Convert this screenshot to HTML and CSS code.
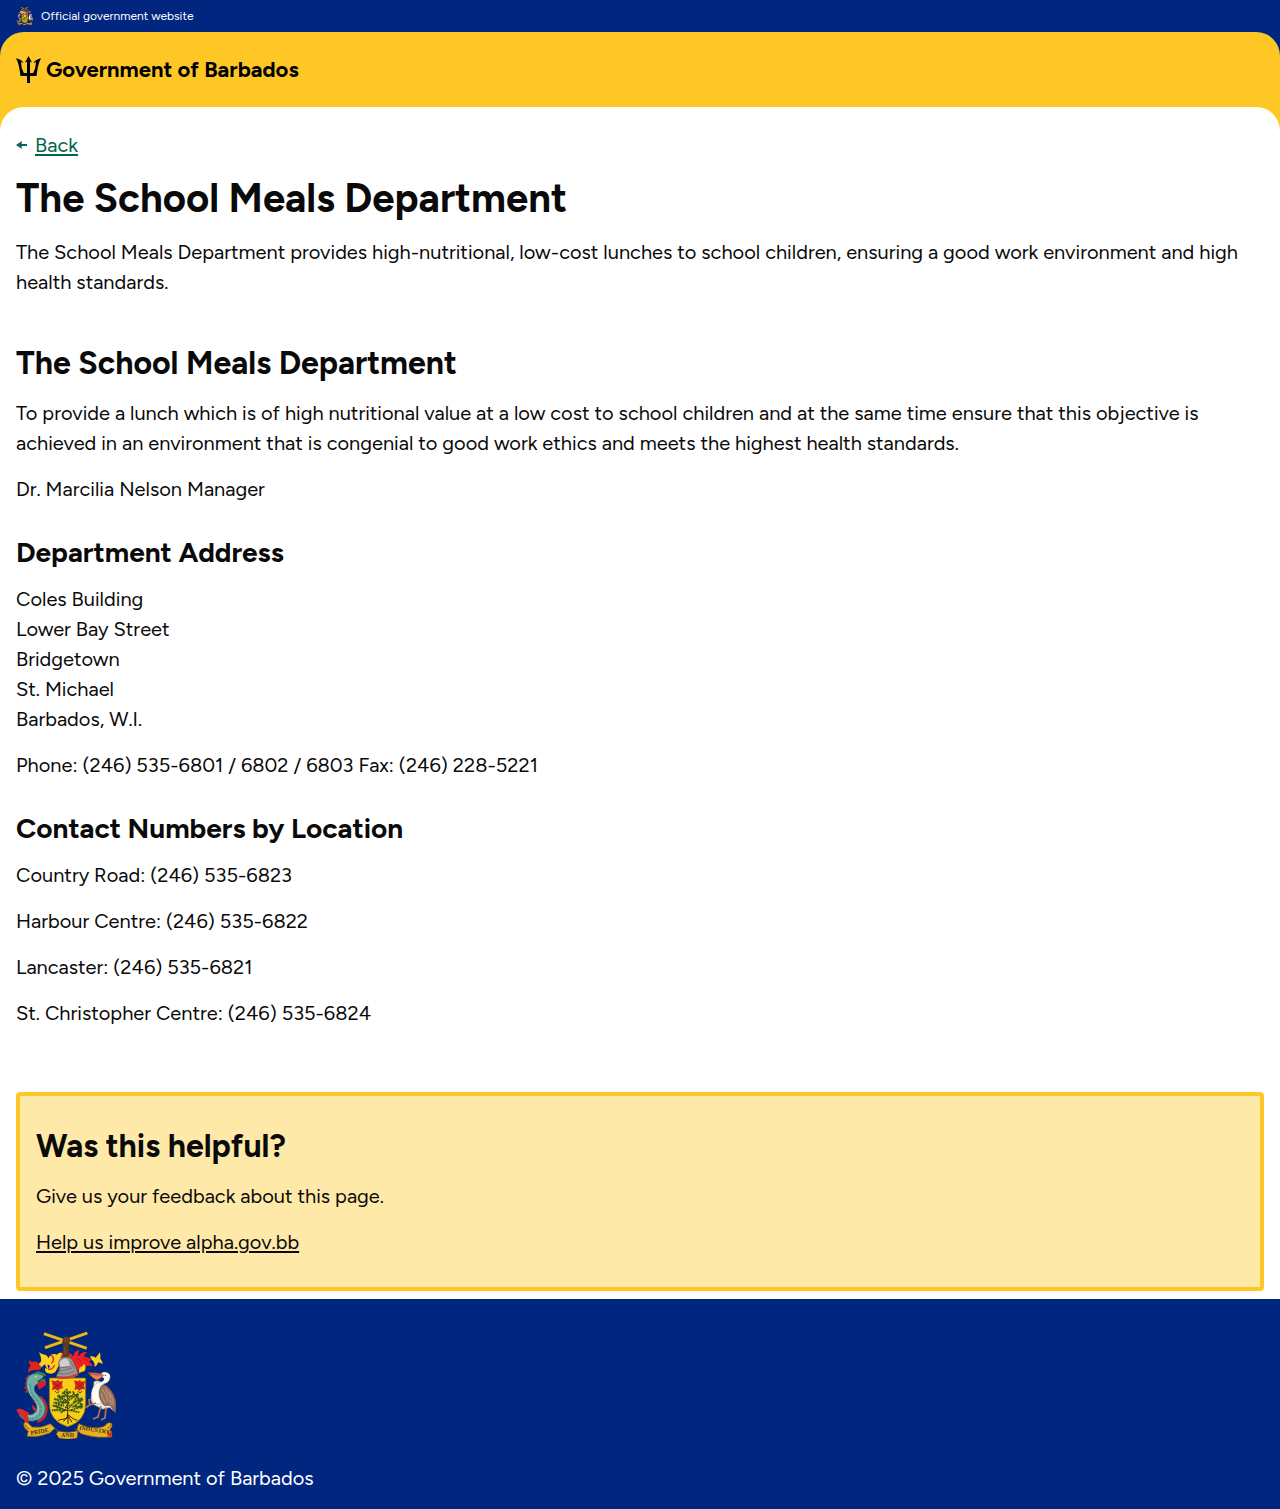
FILE: index.html
```html
<!DOCTYPE html>
<html lang="en">
<head>
<meta charset="utf-8">
<meta name="viewport" content="width=device-width, initial-scale=1">
<title>The School Meals Department</title>
<link rel="stylesheet" href="styles.css">
</head>
<body>
<svg class="sprite" aria-hidden="true">
  <symbol id="coat-of-arms" viewBox="24 28 300 324">
    <!-- crossed sugar cane held by an arm -->
    <g fill="none">
      <path d="M108 36 236 80M238 34 111 78" stroke="#6b5210" stroke-width="10"/>
      <path d="M108 36 236 80M238 34 111 78" stroke="#e8b923" stroke-width="8"/>
    </g>
    <path d="M165 52q0-7 8-8l10 2q5 4 3 12l-4 15 4 32h-24l4-32-4-12z" fill="#5b3620"/>
    <path d="M172 48v14M179 49v13M171 75v24" stroke="#936036" stroke-width="2" fill="none"/>
    <!-- mantling, left side -->
    <path d="M60 152q0-14 8-20-7-8-5-16 8 6 16 4 10-2 13 7l9 9q-4 11-17 8-14 0-24 8z" fill="#e3241d"/>
    <path d="M92 127q8-4 8-13-2-12-7-22 11 8 19 7 7 3 10 11 3-12 14-13 16 0 20 16l-4 20-10 18q-10 8-22 4-12-4-8-17 4 5 11 1 6-6-2-10-12-5-20 8z" fill="#fbd01f"/>
    <path d="M100 97q4 11 14 15 10 4 17-4 10-5 16 4-6 12-18 10-10 0-10 9 0 10 9 12-10 2-14-7-3-12-10-17-8-8-4-22z" fill="#fbd01f"/>
    <path d="M126 101q8 0 10 8 2 9-6 16M120 142q12 4 20-12" fill="none" stroke="#e3241d" stroke-width="4"/>
    <path d="M148 97q8-6 15-3v14l-12 12q-6-12-3-23z" fill="#fbd01f"/>
    <path d="M163 94l-6 14 6 6 3-18zM186 94q11 6 6 20l-6 8-8-14z" fill="#e3241d"/>
    <!-- mantling, right side -->
    <path d="M188 112q0-10 8-10 4-16 19-16-7 10-3 18 10-16 26-12-10 6-9 14 13-2 21 8l-8 6q10 4 12 14-12-4-20 0-2 6-6 12-8-2-12-10-2 10-10 16l-12-14z" fill="#ed2024"/>
    <path d="M246 104q12-2 17 4l13-16q2 12 1 20 8 6 7 16-8-6-13-6-4 10-11 14 0-12-4-17-7-4-10-15zM214 138q10-2 14-12 8 10 2 22l-18 6z" fill="#fbd01f"/>
    <path d="M205 110q10 2 14 10M226 112q8 0 14 6" fill="none" stroke="#a3110f" stroke-width="2"/>
    <!-- shield -->
    <path d="M124 169h109v77q0 52-54 69-55-17-55-69z" fill="#f8cd16" stroke="#806410" stroke-width="2"/>
    <!-- helmet -->
    <path d="M152 124q2-16 20-18 18 0 24 14 8 16 15 38l-14 10-46 3-6-8 10-20z" fill="#9c9b99" stroke="#55504d" stroke-width="2"/>
    <path d="M155 122q8-13 22-10 7 6 8 20l-28 4z" fill="#cfcfcd"/>
    <path d="M152 139l33-4 5 5-36 9zM150 155q26 7 50-7M187 117l12 24" fill="none" stroke="#5c5757" stroke-width="2"/>
    <path d="M148 162q29 7 62-8l2 6q-28 16-64 9z" fill="#c74136"/>
    <!-- red flowers on the shield -->
    <g fill="#d7261e">
      <path d="M130 176l13 3 7-5 6 6 8-4-2 14 3 10-9 1-6 7-8-5-11 2 4-12z"/>
      <path d="M198 176l11 3 7-4 5 5 11-2-4 13 3 12-10-1-6 6-7-5-9 1 3-13z"/>
    </g>
    <path d="M141 208q8 11 13 0M209 208q8 11 13 0" fill="none" stroke="#2e5420" stroke-width="3"/>
    <path d="M139 185l17 15m2-16-17 14M206 184l17 15m1-15-17 15" stroke="#80120f" stroke-width="2" fill="none"/>
    <!-- bearded fig tree -->
    <path d="M179 207v78M179 245l-31-22M179 233l21-20M179 263l33-31M179 267l-39-14M179 224l-15-12" fill="none" stroke="#4b3519" stroke-width="3"/>
    <path d="M179 276l-2 14-27 6M179 284l-13 16M180 280l20 14 8 1M181 285l11 17M180 280v27" fill="none" stroke="#35240f" stroke-width="3"/>
    <g fill="none" stroke="#31581f" stroke-width="5" stroke-dasharray="6 2">
      <path d="M178 202l-12 12 23-3-26 13 34 0-42 1 24 13 32-20-13 23 27-8-28 22 28-1-38 12 27 6"/>
      <path d="M151 219l9 13-22 0 29 10-30 1 31 9-34 0 29 9-31 5 38 0-14 8M176 236l-14 9 22-4-12 18 19-11M195 209l5 14 8-6 1 15 11-2-8 14 10 4-10 7 9 5"/>
    </g>
    <!-- dolphin -->
    <path d="M99 222q24 22 19 49-3 27-31 33l8-22q-5-32-20-43z" fill="#c92528"/>
    <path d="M64 156l-5 58-8-2 5-9-8-3 7-9-5-5 7-8-5-7z" fill="#d4232b"/>
    <path d="M55 181q3-24 29-26 14-4 24 9-7 11-19 14l8 10q-16-3-18 10-2 11 13 25 22 23 20 42-4 29-35 33-27 4-45-18l16-5q22 11 34-5 11-19-7-39-20-21-20-50z" fill="#6dafa5" stroke="#264f52" stroke-width="2"/>
    <path d="M66 187q-3 25 17 45 27 29 8 51-9 10-26 9" fill="none" stroke="#3d8088" stroke-width="8" stroke-dasharray="2 4"/>
    <path d="M61 192q0 23 18 43 22 27 5 44-10 9-26 2" fill="none" stroke="#d5e5d4" stroke-width="3" stroke-dasharray="3 2"/>
    <path d="M92 179q13-7 20-3 6 7-1 16l-18 12q-9-13-1-25z" fill="#d32027"/>
    <path d="M78 153l12-4 18 5 8 10-17-3zM98 174l15-4-3 8-12 3z" fill="#387c53"/>
    <circle cx="83" cy="165" r="3" fill="#f7d637"/>
    <path d="M25 264q12-6 24 2l15 8-5 9q8 13-3 24-8-5-9-17-16-9-22-26zM71 249q14 7 16 21l-12-5z" fill="#d8292d"/>
    <!-- pelican -->
    <path d="M257 180q14-10 31 9 28 18 36 53 2 14-2 30l-17-14-21 5-30-15q-13-18 2-38z" fill="#ece9e2" stroke="#60544c" stroke-width="2"/>
    <path d="M279 194q13-11 24 6 19 19 20 48l1 25-18-22-18 0q-14-17-15-37z" fill="#9c725d" stroke="#57372c" stroke-width="2"/>
    <path d="M282 202q16 17 19 38M293 201q15 21 17 47M278 216l13 28M305 212q10 19 11 39" fill="none" stroke="#ceab8a" stroke-width="2"/>
    <path d="M275 164q6-17 20-12 16 5 10 20-3 12-19 15-9 4-13 17-4 21 8 43l-23-1q-13-23-5-44 7-18 24-20 14-5 11-13z" fill="#fffdf4" stroke="#8e8881" stroke-width="1"/>
    <path d="M241 155q-4-4 3-3l33 3 9 6-8 9-11 6q-12-4-26-21z" fill="#e98557" stroke="#552b23" stroke-width="2"/>
    <path d="M243 155q17 6 36 5" fill="none" stroke="#813429" stroke-width="2"/>
    <circle cx="292" cy="161" r="2" fill="#171719"/>
    <path d="M264 244l-19 6-2-18M244 250l-10 8M294 257l-3 34M279 254l-10 35M291 289l-12 6M269 286l-14 6" fill="none" stroke="#bc7154" stroke-width="5"/>
    <!-- motto ribbon -->
    <path d="M47 306q4-8 14-2 4 8 12 12 28 4 54-10l14 14-16 14q-32 14-68 10l4-16q-15-8-14-22z" fill="#eab127" stroke="#7c5711" stroke-width="2"/>
    <path d="M212 306q26 14 56 12 24-2 28-12 8-6 16 0 2 10-6 16l5 24q-52 4-92-10l-12-12z" fill="#eab127" stroke="#7c5711" stroke-width="2"/>
    <path d="M150 328q28 8 60-1l-3 22q-28 7-54 0l-8-12z" fill="#eab127" stroke="#7c5711" stroke-width="2"/>
    <path d="M52 309q2 10 12 13M308 308q0 8-10 12M141 320l10 10M202 322l8 6" fill="none" stroke="#8f6414" stroke-width="3"/>
    <path d="M298 328l7 6 6-8 2 18-14 2z" fill="#d63a28"/>
    <g class="motto">
      <text x="68" y="340" transform="rotate(-10 68 340)">PRIDE</text>
      <text x="159" y="346">AND</text>
      <text x="213" y="324" transform="rotate(8 213 324)">INDUSTRY</text>
    </g>
  </symbol>
</svg>

<div class="official-bar">
  <svg class="official-crest" aria-hidden="true"><use href="#coat-of-arms"/></svg>
  <span>Official government website</span>
</div>

<div class="header-backdrop">
  <header class="site-header">
    <a class="brand" href="#">
      <svg class="trident" viewBox="0 0 25 27" aria-hidden="true">
        <path d="M12.500 0 16 6.500 14 5.800V17h3.200Q20 11.500 20 6L17.500 7Q19.500 3.200 25 2.200 21.800 8 20.500 20H14V27h-3V20H4.500Q3.200 8 0 2.200 5.500 3.200 7.500 7L5 6Q5 11.500 7.800 17H11V5.800L9 6.500Z"/>
      </svg>
      <span>Government of Barbados</span>
    </a>
  </header>
</div>

<div class="main-backdrop">
  <main class="content">
    <a class="back-link" href="#">
      <svg class="back-arrow" viewBox="0 0 11 10" aria-hidden="true"><path d="M0 5 6 1 5.500 4H11v2H5.500L6 9z"/></svg>
      <span>Back</span>
    </a>

    <h1>The School Meals Department</h1>
    <p>The School Meals Department provides high-nutritional, low-cost lunches to school children, ensuring a good work environment and high health standards.</p>

    <article class="details">
      <h2>The School Meals Department</h2>
      <p>To provide a lunch which is of high nutritional value at a low cost to school children and at the same time ensure that this objective is achieved in an environment that is congenial to good work ethics and meets the highest health standards.</p>
      <p>Dr. Marcilia Nelson Manager</p>

      <h3>Department Address</h3>
      <p>Coles Building<br>Lower Bay Street<br>Bridgetown<br>St. Michael<br>Barbados, W.I.</p>
      <p>Phone: (246) 535-6801 / 6802 / 6803 Fax: (246) 228-5221</p>

      <h3>Contact Numbers by Location</h3>
      <p>Country Road: (246) 535-6823</p>
      <p>Harbour Centre: (246) 535-6822</p>
      <p>Lancaster: (246) 535-6821</p>
      <p>St. Christopher Centre: (246) 535-6824</p>
    </article>

    <section class="feedback">
      <h2>Was this helpful?</h2>
      <p>Give us your feedback about this page.</p>
      <p><a href="#">Help us improve alpha.gov.bb</a></p>
    </section>
  </main>
</div>

<footer class="site-footer">
  <svg class="footer-crest" role="img" aria-label="Coat of arms of Barbados"><use href="#coat-of-arms"/></svg>
  <p>© 2025 Government of Barbados</p>
</footer>
</body>
</html>
```

FILE: styles.css
```css
:root {
  --blue: #00267f;
  --yellow: #ffc726;
  --yellow-light: #ffe9a8;
  --green: #00654a;
  --ink: #0a0a0a;
}

* {
  box-sizing: border-box;
}

body {
  margin: 0;
  background: #fff;
  color: var(--ink);
  font-family: Figtree, Lato, "Open Sans", sans-serif;
  font-size: 20px;
  line-height: 30px;
}

h1,
h2,
h3,
p {
  margin: 0;
}

h1 {
  margin: 16px 0;
  font-size: 40px;
  line-height: 46px;
}

h2 {
  font-size: 32px;
  line-height: 37px;
}

h3 {
  margin-top: 32px;
  font-size: 28px;
  line-height: 32px;
}

h2 + p,
h3 + p,
p + p {
  margin-top: 16px;
}

.sprite {
  display: none;
}

.motto {
  fill: #493207;
  font-family: "Liberation Serif", serif;
  font-size: 18px;
  font-weight: bold;
}

.official-bar {
  display: flex;
  align-items: center;
  gap: 8px;
  height: 32px;
  padding: 0 16px;
  background: var(--blue);
  color: #fff;
  font-size: 12px;
}

.official-crest {
  width: 17px;
  height: 18px;
}

.header-backdrop {
  background: var(--blue);
}

.site-header {
  padding: 24px 16px;
  border-radius: 24px 24px 0 0;
  background: var(--yellow);
}

.brand {
  display: flex;
  align-items: center;
  gap: 5px;
  color: #000;
  font-size: 22px;
  font-weight: 700;
  line-height: 27px;
  text-decoration: none;
}

.trident {
  width: 25px;
  height: 27px;
  fill: currentColor;
}

.main-backdrop {
  background: var(--yellow);
}

.content {
  padding: 24px 16px 8px;
  border-radius: 24px 24px 0 0;
  background: #fff;
}

.back-link {
  display: flex;
  align-items: center;
  gap: 8px;
  width: fit-content;
  color: var(--green);
  line-height: 28px;
  text-decoration: none;
}

.back-link span,
.feedback a {
  text-decoration: underline;
  text-decoration-thickness: 2px;
  text-underline-offset: 2px;
}

.back-arrow {
  width: 11px;
  height: 10px;
  fill: #0e5f64;
}

.details {
  margin: 48px 0 64px;
}

.feedback {
  padding: 32px 16px 30px;
  border: 4px solid var(--yellow);
  border-radius: 4px;
  background: var(--yellow-light);
}

.feedback a {
  color: inherit;
}

.site-footer {
  display: flex;
  flex-direction: column;
  gap: 24px;
  padding: 32px 16px 16px;
  background: var(--blue);
  color: #fff;
}

.footer-crest {
  width: 100px;
  height: 108px;
}
```
